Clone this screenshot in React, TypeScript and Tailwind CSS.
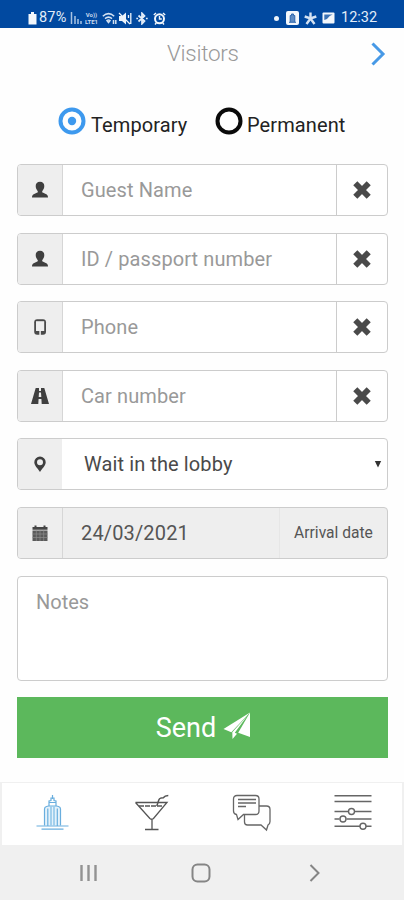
import React, { useState } from 'react';

interface FieldProps {
  icon: React.ReactNode;
  placeholder: string;
}

const UserIcon = () => (
  <svg width="18" height="18" viewBox="0 0 18 18" fill="#3f3f3f">
    <path d="M9 .8c2.800 0 4.300 1.700 4.300 4.300 0 2-.8 3.700-1.900 4.800-.4.5-.3 1.400.3 1.700l3.600 1.700c1.100.5 1.700 1.500 1.700 3.300H1c0-1.800.6-2.800 1.700-3.300l3.600-1.700c.6-.3.7-1.200.3-1.700-1.100-1.100-1.900-2.800-1.900-4.800C4.700 2.500 6.200.8 9 .8z" />
  </svg>
);

const PhoneIcon = () => (
  <svg width="14" height="18" viewBox="0 0 14 18">
    <rect x="1.200" y="1.200" width="11.800" height="15.600" rx="3" fill="#4a4a4a" />
    <rect x="3" y="3.200" width="8.200" height="9.800" fill="#eee" />
    <path d="M7.100 12v5" stroke="#eee" strokeWidth="1.500" />
  </svg>
);

const RoadIcon = () => (
  <svg width="20" height="18" viewBox="0 0 20 18" fill="#3f3f3f">
    <path d="M5.700 1H9v3h2V1h3.300L19 17h-7.300l-.3-5H8.600l-.3 5H1L5.700 1zM9 5.600l-.3 4.400h2.600L11 5.600H9z" fillRule="evenodd" />
  </svg>
);

const PinIcon = () => (
  <svg width="14" height="18" viewBox="0 0 14 18">
    <path d="M7 1.500a5.700 5.700 0 0 1 5.700 5.700C12.700 10.800 9 13.500 7 17 5 13.500 1.300 10.800 1.300 7.200A5.700 5.700 0 0 1 7 1.500zm0 2.800a3 3 0 1 0 0 6 3 3 0 0 0 0-6z" fill="#3f3f3f" fillRule="evenodd" />
  </svg>
);

const CalendarIcon = () => (
  <svg width="16" height="18" viewBox="0 0 16 18">
    <path d="M.5 5.800V3h2V1.500h2V3h7V1.500h2V3h2v2.800z" fill="#444" />
    <path d="M.5 6.500h15V17H.5z" fill="#5a5a5a" />
    <path d="M.5 10h15M.5 13.500h15M4.300 6.500V17M8 6.500V17M11.700 6.500V17" stroke="#8d8d8d" strokeWidth=".7" />
  </svg>
);

const RemoveIcon = () => (
  <svg width="20" height="20" viewBox="0 0 20 20">
    <path d="M3.300 3.300l13.400 13.400M16.700 3.300L3.300 16.700" stroke="#4a4a4a" strokeWidth="5.800" />
  </svg>
);

const SendIcon = () => (
  <svg className="-mt-1" width="28" height="28" viewBox="0 0 28 28" fill="#fff">
    <path d="M27 .5L.5 17l7.800 3.200z" />
    <path d="M27 .5V25l-11.800-4.300z" />
    <path d="M24.500 3.500L9.300 20.200l.2 6.800 4.500-5.200-2.200-1z" />
  </svg>
);

const Addon = ({ children }: { children: React.ReactNode }) => (
  <div className="flex w-[45px] shrink-0 items-center justify-center border-r border-[#d6d6d6] bg-[#eee]">{children}</div>
);

const Field: React.FC<FieldProps> = ({ icon, placeholder }) => {
  const [value, setValue] = useState('');

  return (
    <div className="flex h-[52px] overflow-hidden rounded border border-[#ccc] bg-white">
      <Addon>{icon}</Addon>
      <input
        type="text"
        value={value}
        onChange={(e) => setValue(e.target.value)}
        placeholder={placeholder}
        className="min-w-0 flex-1 pl-[18px] text-[20px] tracking-[0.1px] text-[#555] outline-none placeholder:text-[#999]"
      />
      <button type="button" onClick={() => setValue('')} className="flex w-[51px] items-center justify-center border-l border-[#ccc]">
        <RemoveIcon />
      </button>
    </div>
  );
};

const StatusBar = () => (
  <div className="flex h-7 items-center justify-between bg-[#0149a0] pt-2 pr-[27px] pl-7 text-[14px] leading-none text-[#e3edf8]">
    <div className="flex items-center">
      <svg width="9" height="13" viewBox="0 0 9 13" fill="#f2f7fc">
        <path d="M3 0h3v2h2.500v10.500H.5V2H3z" />
      </svg>
      <span className="ml-[2px] w-[31px] text-[14.500px] tracking-[0.2px]">87%</span>
      <svg width="13" height="12" viewBox="0 0 13 12" stroke="#a9c3e2" strokeWidth="1.500">
        <path d="M1.500 0v12M5 4v8M8 7v5M11 9v3" />
      </svg>
      <span className="flex w-[17px] flex-col items-center text-[6px] leading-[7px] font-bold text-[#c8d9ee]">
        <span>Vo))</span>
        <span>LTE1</span>
      </span>
      <svg className="ml-[2px]" width="15" height="13" viewBox="0 0 15 13" fill="none" stroke="#d4e2f2" strokeWidth="1.500">
        <path d="M.8 4.300Q6.500-1 12.200 4.300M3 6.600q3.500-3 7 0M5 8.700q1.500-1.200 3 0L6.500 10.500zM11.500 8v4M13.800 8v4" />
      </svg>
      <svg className="ml-px" width="14" height="13" viewBox="0 0 14 13" fill="#edf4fb">
        <path d="M1 4h3l4-3.500v12L4 9H1z" />
        <path d="M1 1l11 11M10.500 3v3M12.800 1v11" stroke="#edf4fb" strokeWidth="1.300" />
      </svg>
      <svg className="ml-[4px]" width="12" height="13" viewBox="0 0 12 13" fill="none" stroke="#e3edf8" strokeWidth="1.700">
        <path d="M2.500 3.500l6 5.500L6 11.700V1.300L8.500 4l-6 5.500M.3 6.500h1.800M9.900 6.500h1.800" />
      </svg>
      <svg className="ml-[5px]" width="13" height="13" viewBox="0 0 13 13" fill="none" stroke="#f2f7fc" strokeWidth="2">
        <circle cx="6.500" cy="6.800" r="4.500" />
        <path d="M6.500 4v3h2.300M.8 3L3 1M12.200 3L10 1M2 12.500L3.300 11M11 12.500L9.700 11" strokeWidth="1.400" />
      </svg>
    </div>
    <div className="flex items-center">
      <span className="h-[5px] w-[5px] rounded-full bg-[#edf4fb]" />
      <svg className="ml-[7px]" width="13" height="14" viewBox="0 0 13 14">
        <rect width="13" height="14" rx="2" fill="#f2f7fc" />
        <path d="M4.200 11V4.500h1.300V3h2v1.500h1.300V11M3 11.300h7" fill="#5d8bc3" stroke="#2c66ae" strokeWidth="1" />
      </svg>
      <svg className="ml-[5px]" width="13" height="13" viewBox="0 0 13 13" stroke="#d4e2f2" strokeWidth="2.400">
        <path d="M6.500.5v6L2.500 12M6.500 6.500l4 5.500M.7 4.500l5.800 2 5.800-2" fill="none" />
      </svg>
      <svg className="ml-[5px]" width="13" height="12" viewBox="0 0 13 12">
        <rect x=".5" y=".5" width="12" height="11" rx="1" fill="#f2f7fc" />
        <path d="M2.300 2.500h8.400l-3 1.500L5 7 2.300 8z" fill="#3a72b5" />
      </svg>
      <span className="ml-[6px] w-[36px] text-[14.500px]">12:32</span>
    </div>
  </div>
);

const TabBar = () => (
  <nav className="flex h-[63px] border-2 border-t border-b-0 border-[#f0f0f0] bg-white pb-[2px]">
    <button type="button" className="flex flex-1 items-center justify-center">
      <svg width="34" height="38" viewBox="0 0 34 38" fill="none" stroke="#69aede" strokeWidth="1.200">
        <path d="M9.500 31.500V15q0-2 2-2.500l2-.5h8l2 .5q2 .5 2 2.500v16.500" fill="#e4f2fb" />
        <path d="M17.500 1v4M14 12V7l2-.5V4h3v2.500l2 .5v5M14 8.500h7M12.800 14.500v17M22.300 14.500v17M1.500 32h32M6.500 35.200h22" />
        <path d="M16 12.500v19M19 12.500v19" stroke="#8dc5e9" strokeWidth="1.500" />
      </svg>
    </button>
    <button type="button" className="flex flex-1 items-center justify-center">
      <svg width="36" height="38" viewBox="0 0 36 38" fill="none" stroke="#555" strokeWidth="1.300">
        <path d="M1.500 8.500h31.500L19.500 24.500q-1.800 1.500-3.600 0L1.500 8.500M18 25v10M11 35.500h13.500" />
        <path d="M5 12H29" strokeDasharray="5 1" />
        <path d="M22.800 12l2-6q.5-1.500 2-1.900l2.500-.4q1.500-2 5-2.200" strokeWidth="1.500" />
      </svg>
    </button>
    <button type="button" className="flex flex-1 items-center justify-center">
      <svg width="40" height="38" viewBox="0 0 40 38" fill="none" stroke="#666" strokeWidth="1.300">
        <path d="M5 1.500h18.500q3.500 0 3.500 3.500v12q0 3.500-3.500 3.500H11.500L6 25.500l-1.500-5q-3-.5-3-3.500V5q0-3.500 3.500-3.500z" />
        <path d="M27 12h7.500q3.500 0 3.500 3.500v12q0 2.500-2 3.500l-1.500 5-5.500-5H15.500q-3 0-3-3V20.500M6 5.500h18M6 9h18M6 12.500h8" />
      </svg>
    </button>
    <button type="button" className="flex flex-1 items-center justify-center">
      <svg className="ml-[2px]" width="38" height="38" viewBox="0 0 38 38" fill="none" stroke="#666" strokeWidth="1.400">
        <path d="M.5 1.700h37M.5 7.500h37M.5 17.500H14M21 17.500h16.500M.5 25H5.500M12.500 25h25M.5 32.300H26M32 32.300h5.500" />
        <circle cx="17.500" cy="17.500" r="3" />
        <circle cx="9" cy="25" r="3" />
        <circle cx="29" cy="32.300" r="3" />
      </svg>
    </button>
  </nav>
);

const SystemNav = () => (
  <div className="flex h-[55px] items-center bg-[#f0f0f0] pl-[79px]">
    <svg width="18" height="18" viewBox="0 0 18 18" stroke="#929292" strokeWidth="2.400">
      <path d="M2.500 1v16M9.500 1v16M16.500 1v16" />
    </svg>
    <svg className="ml-[94px]" width="20" height="20" viewBox="0 0 20 20" fill="none" stroke="#858585" strokeWidth="2">
      <rect x="1.500" y="1.500" width="17" height="17" rx="5" />
    </svg>
    <svg className="ml-[98px]" width="12" height="18" viewBox="0 0 12 18" fill="none" stroke="#858585" strokeWidth="2">
      <path d="M1.500 1l8 8-8 8" />
    </svg>
  </div>
);

function Radio({ checked }: { checked: boolean }) {
  return (
    <svg width="28" height="28" viewBox="0 0 28 28" fill="none">
      <circle cx="14" cy="14" r="11.500" stroke={checked ? '#3d99ee' : '#0a0a0a'} strokeWidth="4" />
      {checked && <circle cx="14" cy="14" r="4.200" fill="#3d99ee" />}
    </svg>
  );
}

export default function App() {
  const [type, setType] = useState('temporary');
  const [notes, setNotes] = useState('');

  return (
    <div className="flex h-[900px] w-[404px] flex-col bg-[#fefefe] font-[Roboto,sans-serif] text-[#555]">
      <StatusBar />
      <header className="flex h-[52px] items-center justify-center pl-[167px]">
        <h1 className="flex-1 text-[22.500px] font-light tracking-[-0.300px] text-[#999]">Visitors</h1>
        <svg className="mr-[18px]" width="16" height="24" viewBox="0 0 16 24" fill="none" stroke="#4799e6" strokeWidth="3">
          <path d="M2.500 1.500L13 12 2.500 22.500" />
        </svg>
      </header>

      <div className="flex h-[84px] pt-[27px] pl-[58px] text-[20px] text-[#222]">
        <button type="button" onClick={() => setType('temporary')} className="flex w-[157px] items-start">
          <Radio checked={type === 'temporary'} />
          <span className="ml-[5px] pt-[3px] tracking-[0.100px]">Temporary</span>
        </button>
        <button type="button" onClick={() => setType('permanent')} className="flex items-start">
          <Radio checked={type === 'permanent'} />
          <span className="ml-[4px] pt-[3px] tracking-[0.100px]">Permanent</span>
        </button>
      </div>

      <form className="flex flex-1 flex-col gap-[16.600px] pr-4 pl-[17px]" onSubmit={(e) => e.preventDefault()}>
        <Field icon={<UserIcon />} placeholder="Guest Name" />
        <Field icon={<UserIcon />} placeholder="ID / passport number" />
        <Field icon={<PhoneIcon />} placeholder="Phone" />
        <Field icon={<RoadIcon />} placeholder="Car number" />

        <div className="flex h-[52px] items-stretch overflow-hidden rounded border border-[#ccc] bg-white">
          <div className="flex w-[44px] shrink-0 items-center justify-center bg-[#eee]">
            <PinIcon />
          </div>
          <button type="button" className="flex flex-1 items-center justify-between pr-[5px] pl-[22px] text-[20px] tracking-[0.100px] text-[#4a4a4a]">
            Wait in the lobby
            <svg width="8" height="8" viewBox="0 0 8 8" fill="#333">
              <path d="M.8 1h6.400L4 7.500z" />
            </svg>
          </button>
        </div>

        <div className="flex h-[52px] overflow-hidden rounded border border-[#ccc] bg-[#eee]">
          <Addon>
            <CalendarIcon />
          </Addon>
          <div className="flex flex-1 items-center pl-[18px] text-[20px] tracking-[0.150px]">24/03/2021</div>
          <div className="flex w-[108px] items-center justify-center border-l border-[#e6e6e6] pt-px text-[15.600px]">Arrival date</div>
        </div>

        <textarea
          value={notes}
          onChange={(e) => setNotes(e.target.value)}
          placeholder="Notes"
          className="h-[105px] resize-none rounded border border-[#ccc] bg-white px-[18px] py-[10px] text-[20px] leading-[30px] outline-none placeholder:text-[#999]"
        />

        <button type="submit" className="flex h-[61px] items-center justify-center gap-[7px] bg-[#5cb85c] pt-px pl-[2px] text-[27px] text-white">
          Send
          <SendIcon />
        </button>
      </form>

      <TabBar />
      <SystemNav />
    </div>
  );
}
